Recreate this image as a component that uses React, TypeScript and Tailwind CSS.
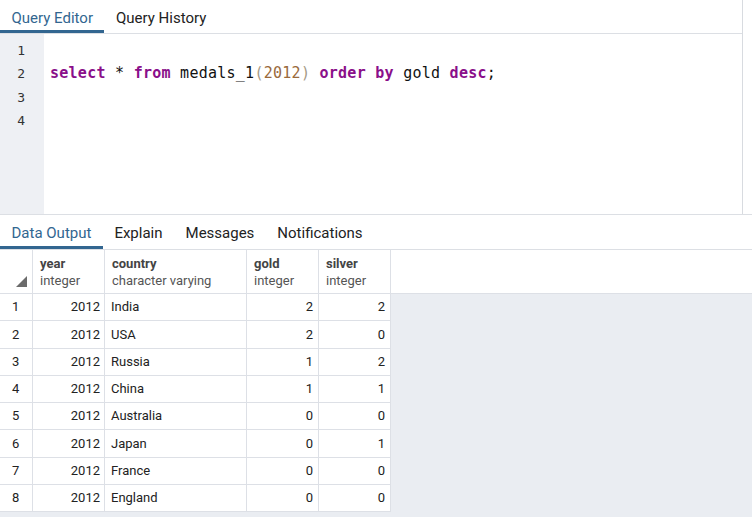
import React from "react";

const rows = [
  ["2012", "India", "2", "2"],
  ["2012", "USA", "2", "0"],
  ["2012", "Russia", "1", "2"],
  ["2012", "China", "1", "1"],
  ["2012", "Australia", "0", "0"],
  ["2012", "Japan", "0", "1"],
  ["2012", "France", "0", "0"],
  ["2012", "England", "0", "0"],
];

const cols = [
  { name: "year", type: "integer", w: "w-[72px]" },
  { name: "country", type: "character varying", w: "w-[142px]" },
  { name: "gold", type: "integer", w: "w-[72px]" },
  { name: "silver", type: "integer", w: "w-[72px]" },
];

function Tab({ label, active }: { label: string; active?: boolean }) {
  return (
    <div
      className={
        "flex h-full items-center px-[11.5px] border-b-[3px] " +
        (active ? "border-[#326690] text-[#326690]" : "border-transparent text-[#222]")
      }
    >
      <span className="pt-[6px]">{label}</span>
    </div>
  );
}

export default function App() {
  return (
    <div className="w-[752px] h-[517px] overflow-hidden bg-white text-[15px] font-['Roboto',sans-serif]">
      {/* editor panel */}
      <div className="flex h-[214px]">
        <div className="flex-1 flex flex-col">
          <div className="flex h-[34px] border-b border-[#dcdfe4]">
            <Tab label="Query Editor" active />
            <Tab label="Query History" />
          </div>
          <div className="flex flex-1">
            <div className="w-[44px] bg-[#eef0f4] pt-[5px] font-['DejaVu_Sans_Mono',monospace] text-[13px] text-[#333]">
              {[1, 2, 3, 4].map((n) => (
                <div key={n} className="h-[23.3px] leading-[23.3px] text-right pr-[19px]">{n}</div>
              ))}
            </div>
            <div className="flex-1 pt-[5px] pl-[6px] font-['DejaVu_Sans_Mono',monospace] text-[15px] text-[#111] whitespace-pre">
              <div className="h-[23.3px]" />
              <div className="h-[23.3px] leading-[23.3px] tracking-[0.26px]">
                <span className="font-bold text-[#8a0f8a]">select</span>{" * "}
                <span className="font-bold text-[#8a0f8a]">from</span>{" medals_1"}
                <span className="text-[#a59a86]">(</span>
                <span className="text-[#9a6a3c]">2012</span>
                <span className="text-[#a59a86]">)</span>{" "}
                <span className="font-bold text-[#8a0f8a]">order</span>{" "}
                <span className="font-bold text-[#8a0f8a]">by</span>{" gold "}
                <span className="font-bold text-[#8a0f8a]">desc</span>;
              </div>
            </div>
          </div>
        </div>
        <div className="w-[10px] border-l border-[#d8dbe0]" />
      </div>

      {/* result panel */}
      <div className="flex h-[36px] border-t border-b border-[#dcdfe4]">
        <Tab label="Data Output" active />
        <Tab label="Explain" />
        <Tab label="Messages" />
        <Tab label="Notifications" />
      </div>
      <div className="flex h-[268px] bg-[#eaedf2] text-[13px] text-[#222]">
        <div className="flex flex-col">
          <div className="flex h-[44px] bg-white border-b border-[#dde0e6]">
            <div className="w-[33px] border-r border-[#dde0e6] flex items-end justify-end pb-[6px] pr-[5px]">
              <svg width="11" height="11" viewBox="0 0 11 11">
                <polygon points="11,0 11,11 0,11" fill="#6b6b6b" />
              </svg>
            </div>
            {cols.map((c) => (
              <div key={c.name} className={c.w + " border-r border-[#dde0e6] pl-[7px] pt-[5px] leading-[17px]"}>
                <div className="font-bold text-[#444]">{c.name}</div>
                <div className="text-[#555]">{c.type}</div>
              </div>
            ))}
          </div>
          {rows.map((r, i) => (
            <div key={i} className="flex h-[27.25px] bg-white border-b border-[#dde0e6] items-center">
              <div className="w-[33px] h-full border-r border-[#dde0e6] flex items-center pl-[12px]">{i + 1}</div>
              <div className="w-[72px] h-full border-r border-[#dde0e6] flex items-center justify-end pr-[4px]">{r[0]}</div>
              <div className="w-[142px] h-full border-r border-[#dde0e6] flex items-center pl-[6px]">{r[1]}</div>
              <div className="w-[72px] h-full border-r border-[#dde0e6] flex items-center justify-end pr-[5px]">{r[2]}</div>
              <div className="w-[72px] h-full border-r border-[#dde0e6] flex items-center justify-end pr-[5px]">{r[3]}</div>
            </div>
          ))}
        </div>
        <div className="flex-1">
          <div className="h-[44px] bg-white border-b border-[#dde0e6]" />
        </div>
      </div>
    </div>
  );
}
